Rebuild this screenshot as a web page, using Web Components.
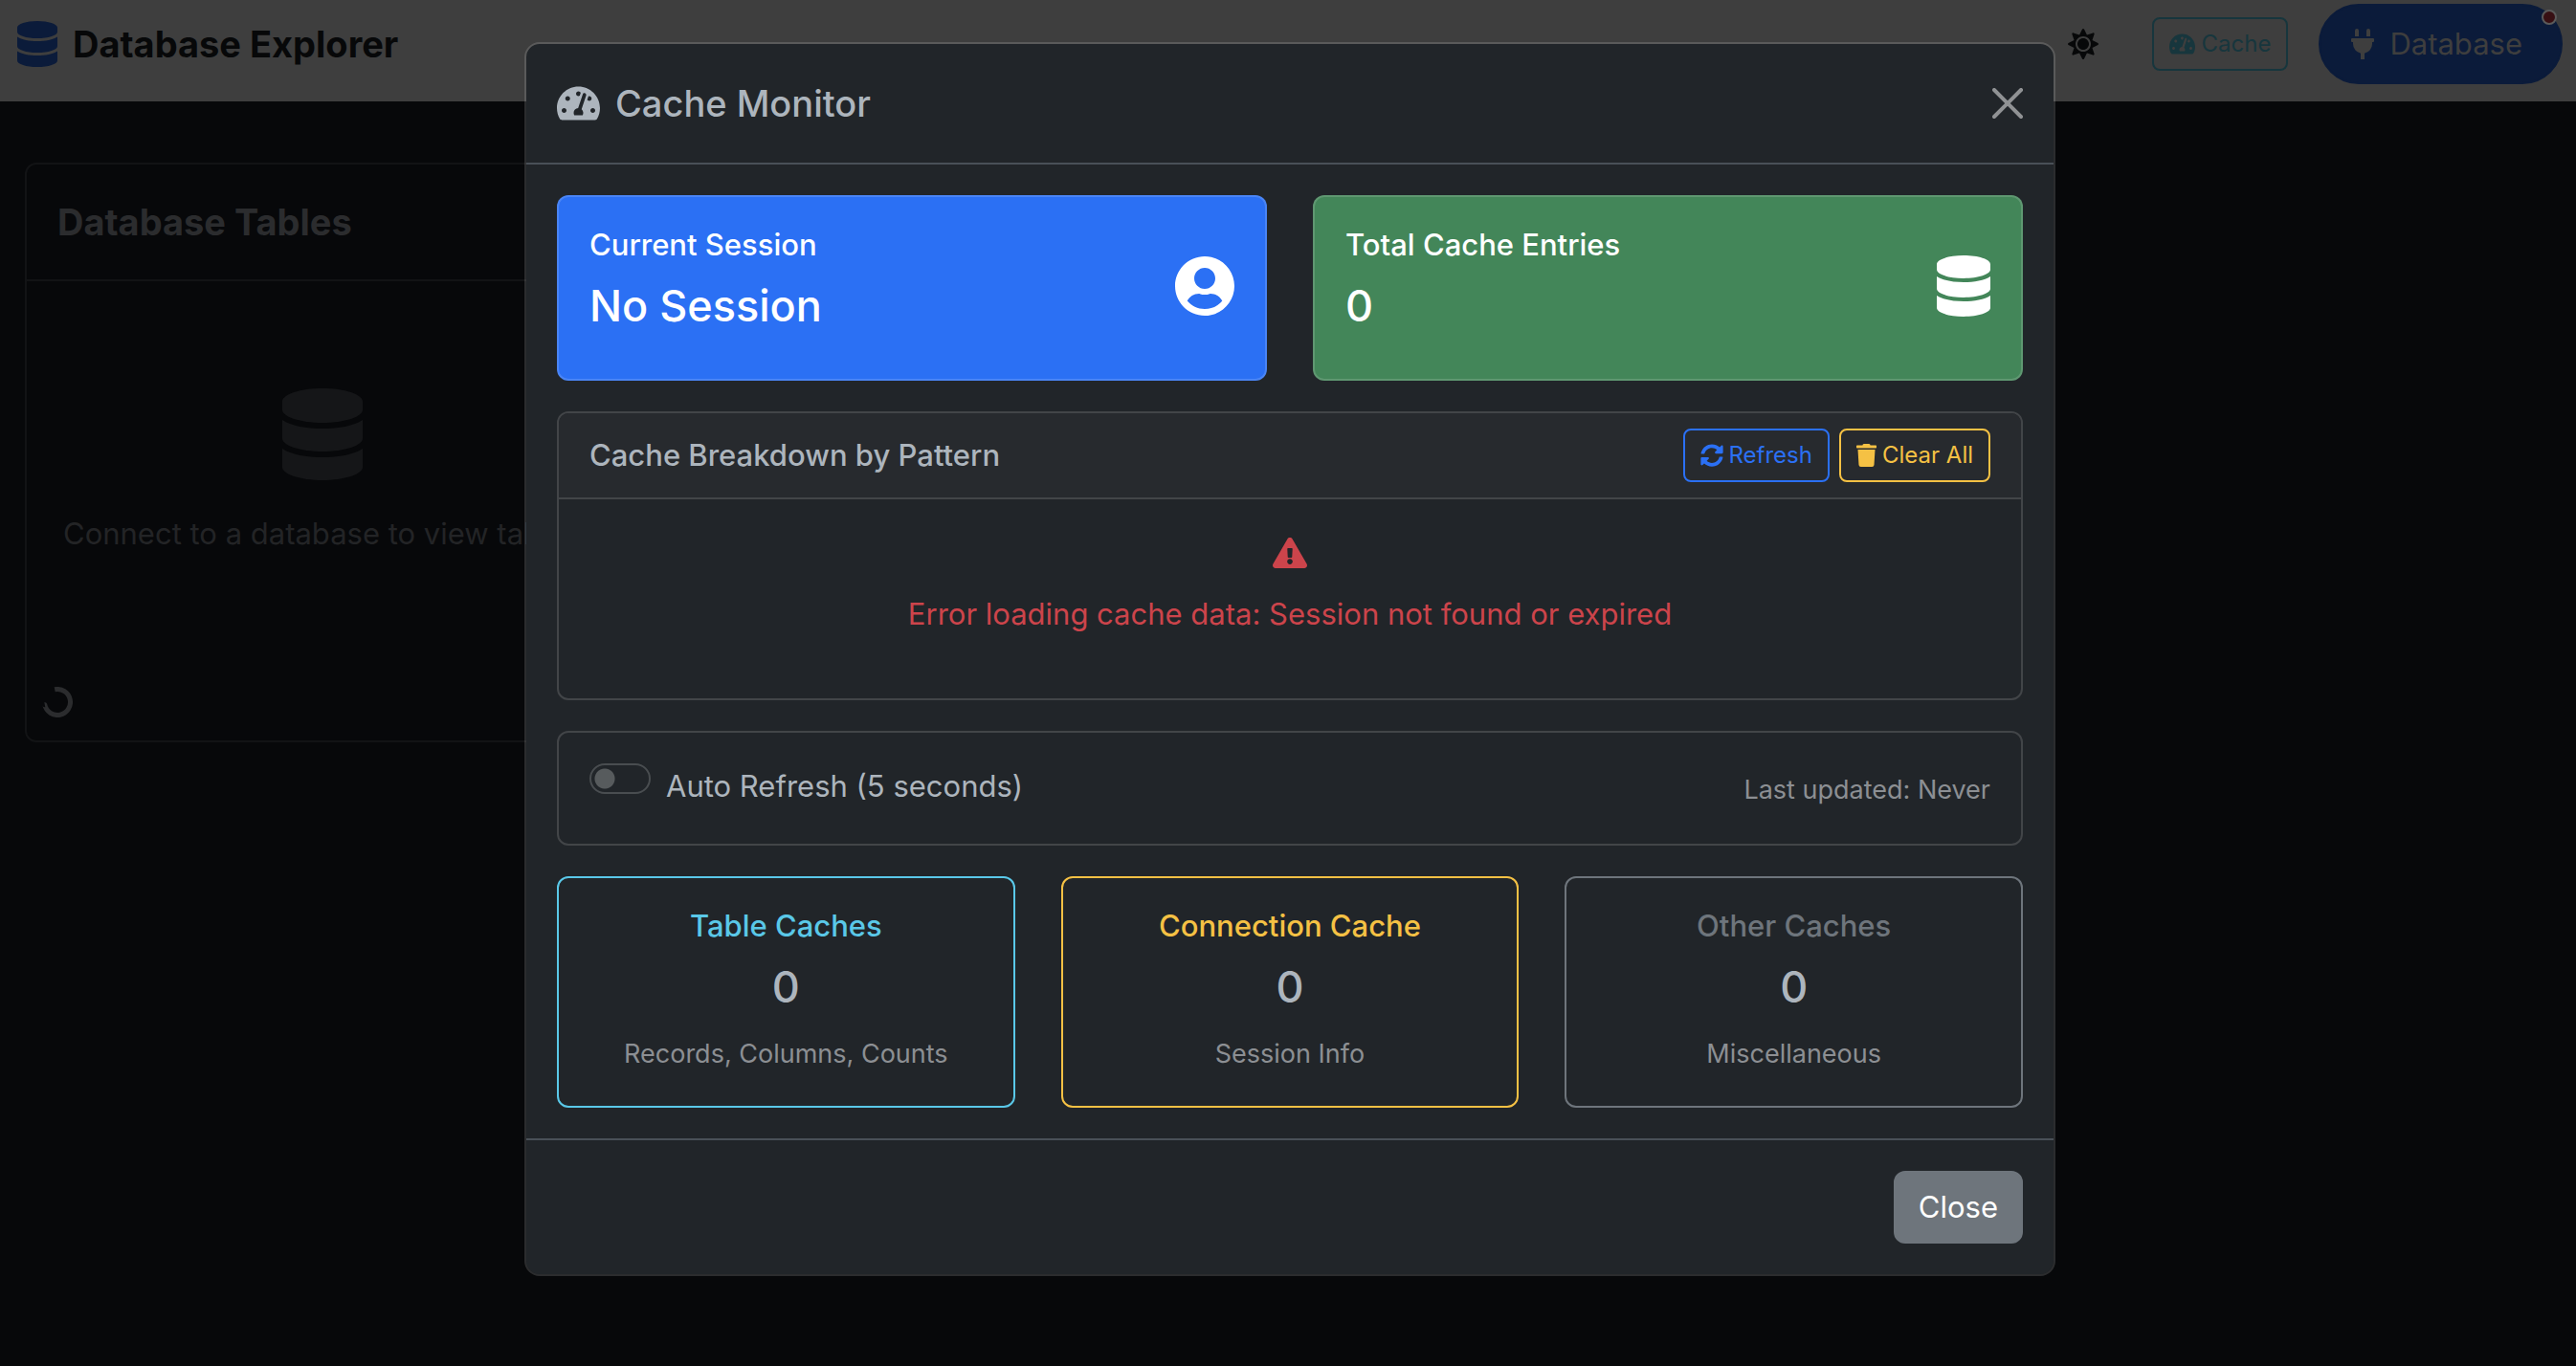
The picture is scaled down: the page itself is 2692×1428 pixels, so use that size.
<!DOCTYPE html>
<html lang="en">
<head>
<meta charset="utf-8">
<title>Database Explorer</title>
<style>
  body {
    margin: 0;
    min-height: 100vh;
    background: #07080a;
    color: #adb5bd;
    font: 400 31px/48px Inter, "Liberation Sans", sans-serif;
  }
</style>
</head>
<body>
<app-navbar></app-navbar>
<tables-panel></tables-panel>
<cache-modal></cache-modal>

<script>
const ICONS = {
  database: [448, 'M448 73.143v45.714C448 159.143 347.667 192 224 192S0 159.143 0 118.857V73.143C0 32.857 100.333 0 224 0s224 32.857 224 73.143zM448 176v102.857C448 319.143 347.667 352 224 352S0 319.143 0 278.857V176c48.125 33.143 136.208 48.572 224 48.572S399.874 209.143 448 176zm0 160v102.857C448 479.143 347.667 512 224 512S0 479.143 0 438.857V336c48.125 33.143 136.208 48.572 224 48.572S399.874 369.143 448 336z'],
  gauge: [576, 'M288 32C128.94 32 0 160.94 0 320c0 52.8 14.25 102.26 39.06 144.8 5.61 9.62 16.3 15.2 27.44 15.2h443c11.14 0 21.83-5.58 27.44-15.2C561.75 422.26 576 372.8 576 320c0-159.06-128.94-288-288-288zm0 64c14.71 0 26.58 10.13 30.32 23.65-1.11 2.26-2.64 4.23-3.45 6.67l-9.22 27.67c-5.13 3.49-10.97 6.01-17.64 6.01-17.67 0-32-14.33-32-32S270.33 96 288 96zM96 384c-17.67 0-32-14.33-32-32s14.33-32 32-32 32 14.33 32 32-14.33 32-32 32zm48-160c-17.67 0-32-14.33-32-32s14.33-32 32-32 32 14.33 32 32-14.33 32-32 32zm246.77-72.41l-61.33 184C343.13 347.33 352 364.54 352 384c0 11.72-3.38 22.55-8.88 32H232.88c-5.5-9.45-8.88-20.28-8.88-32 0-33.94 26.5-61.43 59.9-63.59l61.34-184.01c4.17-12.56 17.73-19.45 30.36-15.17 12.57 4.19 19.35 17.79 15.17 30.36zm14.66 57.2l15.52-46.55c3.47-1.29 7.13-2.23 11.05-2.23 17.67 0 32 14.33 32 32s-14.33 32-32 32c-11.38-.01-20.89-6.28-26.57-15.22zM480 384c-17.67 0-32-14.33-32-32s14.33-32 32-32 32 14.33 32 32-14.33 32-32 32z'],
  user: [496, 'M248 8C111 8 0 119 0 256s111 248 248 248 248-111 248-248S385 8 248 8zm0 96c48.6 0 88 39.4 88 88s-39.4 88-88 88-88-39.4-88-88 39.4-88 88-88zm0 344c-58.7 0-111.3-26.6-146.5-68.2 18.8-35.4 55.6-59.8 98.5-59.8 2.4 0 4.8.4 7.1 1.1 13 4.2 26.6 6.9 40.9 6.9 14.3 0 28-2.7 40.9-6.9 2.3-.7 4.7-1.1 7.1-1.1 42.9 0 79.7 24.4 98.5 59.8C359.3 421.4 306.7 448 248 448z'],
  sync: [512, 'M370.72 133.28C339.458 104.008 298.888 87.962 255.848 88c-77.458.068-144.328 53.178-162.791 126.85-1.344 5.363-6.122 9.15-11.651 9.15H24.103c-7.498 0-13.194-6.807-11.807-14.176C33.933 94.924 134.813 8 256 8c66.448 0 126.791 26.136 171.315 68.685L463.03 40.97C478.149 25.851 504 36.559 504 57.941V192c0 13.255-10.745 24-24 24H345.941c-21.382 0-32.09-25.851-16.971-40.971l41.75-41.749zM32 296h134.059c21.382 0 32.09 25.851 16.971 40.971l-41.75 41.75c31.262 29.273 71.835 45.319 114.876 45.28 77.418-.07 144.315-53.144 162.787-126.849 1.344-5.363 6.122-9.15 11.651-9.15h57.304c7.498 0 13.194 6.807 11.807 14.176C478.067 417.076 377.187 504 256 504c-66.448 0-126.791-26.136-171.315-68.685L48.97 471.03C33.851 486.149 8 475.441 8 454.059V320c0-13.255 10.745-24 24-24z'],
  trash: [448, 'M432 32H312l-9.4-18.7A24 24 0 0 0 281.1 0H166.8a23.72 23.72 0 0 0-21.4 13.3L136 32H16A16 16 0 0 0 0 48v32a16 16 0 0 0 16 16h416a16 16 0 0 0 16-16V48a16 16 0 0 0-16-16zM53.2 467a48 48 0 0 0 47.9 45h245.8a48 48 0 0 0 47.9-45L416 128H32z'],
  warning: [576, 'M569.517 440.013C587.975 472.007 564.806 512 527.94 512H48.054c-36.937 0-59.999-40.055-41.577-71.987L246.423 23.985c18.467-32.009 64.72-31.951 83.154 0l239.94 416.028zM288 354c-25.405 0-46 20.595-46 46s20.595 46 46 46 46-20.595 46-46-20.595-46-46-46zm-43.673-165.346l7.418 136c.347 6.364 5.609 11.346 11.982 11.346h48.546c6.373 0 11.635-4.982 11.982-11.346l7.418-136c.375-6.874-5.098-12.654-11.982-12.654h-63.383c-6.884 0-12.356 5.78-11.981 12.654z'],
  plug: [384, 'M320,32a32,32,0,0,0-64,0v96h64Zm48,128H16A16,16,0,0,0,0,176v32a16,16,0,0,0,16,16H32v32A160.07,160.07,0,0,0,160,412.8V512h64V412.8A160.07,160.07,0,0,0,352,256V224h16a16,16,0,0,0,16-16V176A16,16,0,0,0,368,160ZM128,32a32,32,0,0,0-64,0v96h64Z'],
  sun: [512, 'M256 160c-52.9 0-96 43.1-96 96s43.1 96 96 96 96-43.1 96-96-43.1-96-96-96zm246.4 80.5l-94.7-47.3 33.5-100.4c4.5-13.6-8.4-26.5-21.9-21.9l-100.4 33.5-47.4-94.8c-6.4-12.8-24.6-12.8-31 0l-47.3 94.7L92.7 70.8c-13.6-4.5-26.5 8.4-21.9 21.9l33.5 100.4-94.7 47.4c-12.8 6.4-12.8 24.6 0 31l94.7 47.3-33.5 100.5c-4.5 13.6 8.4 26.5 21.9 21.9l100.4-33.5 47.3 94.7c6.4 12.8 24.6 12.8 31 0l47.3-94.7 100.4 33.5c13.6 4.5 26.5-8.4 21.9-21.9l-33.5-100.4 94.7-47.3c13-6.5 13-24.7.2-31.1zm-155.9 106c-49.9 49.9-131.1 49.9-181 0-49.9-49.9-49.9-131.1 0-181 49.9-49.9 131.1-49.9 181 0 49.9 49.9 49.9 131.1 0 181z']
};

const define = (name, markup) => customElements.define(name, class extends HTMLElement {
  constructor() {
    super();
    this.attachShadow({ mode: 'open' }).innerHTML = markup;
  }
});

customElements.define('app-icon', class extends HTMLElement {
  constructor() {
    super();
    this.attachShadow({ mode: 'open' });
  }
  connectedCallback() {
    const [width, path] = ICONS[this.getAttribute('name')];
    this.shadowRoot.innerHTML = `
      <style>
        :host { display: inline-flex; flex: none; font-size: var(--icon-size, 24px); line-height: 1; }
        svg { display: block; height: 1em; fill: currentColor; }
      </style>
      <svg viewBox="0 0 ${width} 512" aria-hidden="true"><path d="${path}"/></svg>`;
  }
});

define('outline-button', `
  <style>
    :host { display: block; }
    button {
      display: flex; align-items: center; gap: 6px;
      padding: 8px 16px; border: 2px solid currentColor; border-radius: 8px;
      background: none; color: inherit; font: inherit; font-size: 24px; line-height: 36px;
    }
  </style>
  <button type="button"><slot name="icon"></slot><slot></slot></button>`);

define('app-navbar', `
  <style>
    :host {
      display: flex; align-items: center; justify-content: space-between;
      box-sizing: border-box; min-height: 106px; padding: 4px 14px 18px 18px;
      background: #3e3e3e; color: #070809;
    }
    .brand { display: flex; align-items: center; gap: 16px; color: inherit; text-decoration: none; font-size: 38px; font-weight: 700; }
    .brand app-icon { --icon-size: 48px; color: #0b1b3a; }
    nav { display: flex; align-items: center; }
    .theme { display: flex; padding: 0; margin-right: 56px; border: 0; background: none; color: inherit; --icon-size: 32px; }
    outline-button { margin-right: 32px; color: #17363d; }
    .connect {
      position: relative; display: flex; align-items: center; gap: 16px;
      padding: 16px 40px 16px 32px; border: 2px solid #0b1b3a; border-radius: 42px;
      background: #0b1b3a; color: #3e3e3e; font: inherit; --icon-size: 32px;
    }
    .status {
      position: absolute; top: 4px; right: 4px; box-sizing: border-box; width: 16px; height: 16px;
      border: 2px solid #5a5a5a; border-radius: 50%; background: #370f13;
    }
  </style>
  <a class="brand" href="#"><app-icon name="database"></app-icon>Database Explorer</a>
  <nav>
    <button class="theme" type="button" aria-label="Toggle theme"><app-icon name="sun"></app-icon></button>
    <outline-button><app-icon slot="icon" name="gauge"></app-icon>Cache</outline-button>
    <button class="connect" type="button"><app-icon name="plug"></app-icon>Database<span class="status"></span></button>
  </nav>`);

define('tables-panel', `
  <style>
    :host { display: block; box-sizing: border-box; width: 25%; padding: 64px 25px 0 26px; }
    section { border: 2px solid #121315; border-radius: 12px; color: #232426; }
    header { padding: 36px 32px; border-bottom: 2px solid #121315; }
    h2 { margin: 0; color: #2b2c2e; font-size: 38px; font-weight: 700; line-height: 48px; }
    .empty { display: flex; flex-direction: column; align-items: center; gap: 32px; padding: 112px 24px 136px; white-space: nowrap; }
    .empty app-icon { --icon-size: 96px; color: #151618; }
    p { margin: 0; }
    .spinner { display: block; width: 32px; height: 32px; margin: 0 16px 24px; fill: none; stroke: #2b2c2e; stroke-width: 5; }
  </style>
  <section>
    <header><h2>Database Tables</h2></header>
    <div class="empty"><app-icon name="database"></app-icon><p>Connect to a database to view tables</p></div>
    <svg class="spinner" viewBox="0 0 32 32" aria-hidden="true">
      <circle cx="16" cy="16" r="13.5" pathLength="360" stroke-dasharray="270 90" transform="rotate(-102 16 16)"/>
    </svg>
  </section>`);

define('stat-card', `
  <style>
    :host {
      display: flex; align-items: center; justify-content: space-between;
      padding: 32px; border: 2px solid rgba(255, 255, 255, .15); border-radius: 12px; color: #fff;
    }
    h6, h4 { margin: 0; font-weight: 500; }
    h6 { padding-bottom: 16px; font-size: 31px; line-height: 36px; }
    h4 { padding-bottom: 14px; font-size: 45px; line-height: 60px; }
    ::slotted(app-icon) { --icon-size: 64px; padding-bottom: 4px; }
  </style>
  <div><h6><slot name="label"></slot></h6><h4><slot></slot></h4></div>
  <slot name="icon"></slot>`);

define('count-card', `
  <style>
    :host { display: block; padding: 32px 32px 28px; border: 2px solid var(--accent); border-radius: 12px; text-align: center; }
    h6, h4 { margin: 0; font-weight: 500; }
    h6 { padding-bottom: 16px; color: var(--accent); font-size: 31px; line-height: 36px; }
    h4 { padding-bottom: 14px; font-size: 45px; line-height: 60px; }
    small { display: block; color: #8c8f93; font-size: 27px; line-height: 52px; }
  </style>
  <h6><slot name="label"></slot></h6><h4><slot></slot></h4><small><slot name="note"></slot></small>`);

define('breakdown-card', `
  <style>
    :host { display: block; overflow: hidden; border: 2px solid #424548; border-radius: 12px; }
    header { display: flex; align-items: center; justify-content: space-between; padding: 16px 32px; border-bottom: 2px solid #424548; background: #272a2e; }
    h6 { margin: 0; font-size: 31px; font-weight: 500; line-height: 36px; }
    .actions { display: flex; gap: 10px; }
    .refresh { color: #2b70f4; }
    .clear { color: #f5c144; }
    .error { display: flex; flex-direction: column; align-items: center; gap: 24px; padding: 40px 32px 64px; color: #cc444b; --icon-size: 32px; }
    p { margin: 0; }
  </style>
  <header>
    <h6>Cache Breakdown by Pattern</h6>
    <div class="actions">
      <outline-button class="refresh"><app-icon slot="icon" name="sync"></app-icon>Refresh</outline-button>
      <outline-button class="clear"><app-icon slot="icon" name="trash"></app-icon>Clear All</outline-button>
    </div>
  </header>
  <div class="error"><app-icon name="warning"></app-icon><p>Error loading cache data: Session not found or expired</p></div>`);

define('refresh-card', `
  <style>
    :host { display: flex; align-items: flex-end; justify-content: space-between; padding: 32px; border: 2px solid #424548; border-radius: 12px; }
    .switch { display: flex; gap: 16px; padding-bottom: 4px; }
    input {
      appearance: none; box-sizing: border-box; width: 64px; height: 32px; margin: 0;
      border: 2px solid #494d50; border-radius: 16px;
      background: radial-gradient(circle at 14px 14px, #575b5d 10px, transparent 11px);
    }
    small { color: #8c8f93; font-size: 27px; }
  </style>
  <div class="switch"><input id="auto" type="checkbox" role="switch"><label for="auto">Auto Refresh (5 seconds)</label></div>
  <small>Last updated: Never</small>`);

define('cache-modal', `
  <style>
    :host { position: absolute; inset: 0; display: block; padding: 44px 0 0 4px; }
    .dialog {
      box-sizing: border-box; max-width: 1600px; margin: 0 auto;
      border: 2px solid rgba(255, 255, 255, .15); border-radius: 16px;
      background: #212529; background-clip: padding-box;
    }
    .head { display: flex; align-items: center; justify-content: space-between; padding: 32px; border-bottom: 2px solid #495057; }
    h5 { display: flex; align-items: center; gap: 16px; margin: 0; font-size: 38px; font-weight: 500; line-height: 60px; --icon-size: 40px; }
    .dismiss { display: flex; padding: 0; border: 0; background: none; }
    .dismiss svg { width: 32px; height: 32px; fill: #909294; }
    .body { display: grid; gap: 32px; padding: 32px; }
    .row { display: grid; grid-auto-flow: column; grid-auto-columns: 1fr; gap: 48px; }
    .session { background: #2b70f4; }
    .total { background: #438659; }
    .tables { --accent: #5ac8e8; }
    .connection { --accent: #f5c144; }
    .other { --accent: #6e757c; }
    .foot { display: flex; justify-content: flex-end; padding: 32px; border-top: 2px solid #495057; }
    .close { padding: 12px 24px; border: 2px solid #6e757c; border-radius: 12px; background: #6e757c; color: #fff; font: inherit; }
  </style>
  <div class="dialog" role="dialog" aria-labelledby="title">
    <div class="head">
      <h5 id="title"><app-icon name="gauge"></app-icon>Cache Monitor</h5>
      <button class="dismiss" type="button" aria-label="Dismiss">
        <svg viewBox="0 0 16 16" aria-hidden="true"><path d="M.293.293a1 1 0 0 1 1.414 0L8 6.586 14.293.293a1 1 0 1 1 1.414 1.414L9.414 8l6.293 6.293a1 1 0 0 1-1.414 1.414L8 9.414l-6.293 6.293a1 1 0 0 1-1.414-1.414L6.586 8 .293 1.707a1 1 0 0 1 0-1.414z"/></svg>
      </button>
    </div>
    <div class="body">
      <div class="row">
        <stat-card class="session"><span slot="label">Current Session</span>No Session<app-icon slot="icon" name="user"></app-icon></stat-card>
        <stat-card class="total"><span slot="label">Total Cache Entries</span>0<app-icon slot="icon" name="database"></app-icon></stat-card>
      </div>
      <breakdown-card></breakdown-card>
      <refresh-card></refresh-card>
      <div class="row">
        <count-card class="tables"><span slot="label">Table Caches</span>0<span slot="note">Records, Columns, Counts</span></count-card>
        <count-card class="connection"><span slot="label">Connection Cache</span>0<span slot="note">Session Info</span></count-card>
        <count-card class="other"><span slot="label">Other Caches</span>0<span slot="note">Miscellaneous</span></count-card>
      </div>
    </div>
    <div class="foot"><button class="close" type="button">Close</button></div>
  </div>`);
</script>
</body>
</html>
